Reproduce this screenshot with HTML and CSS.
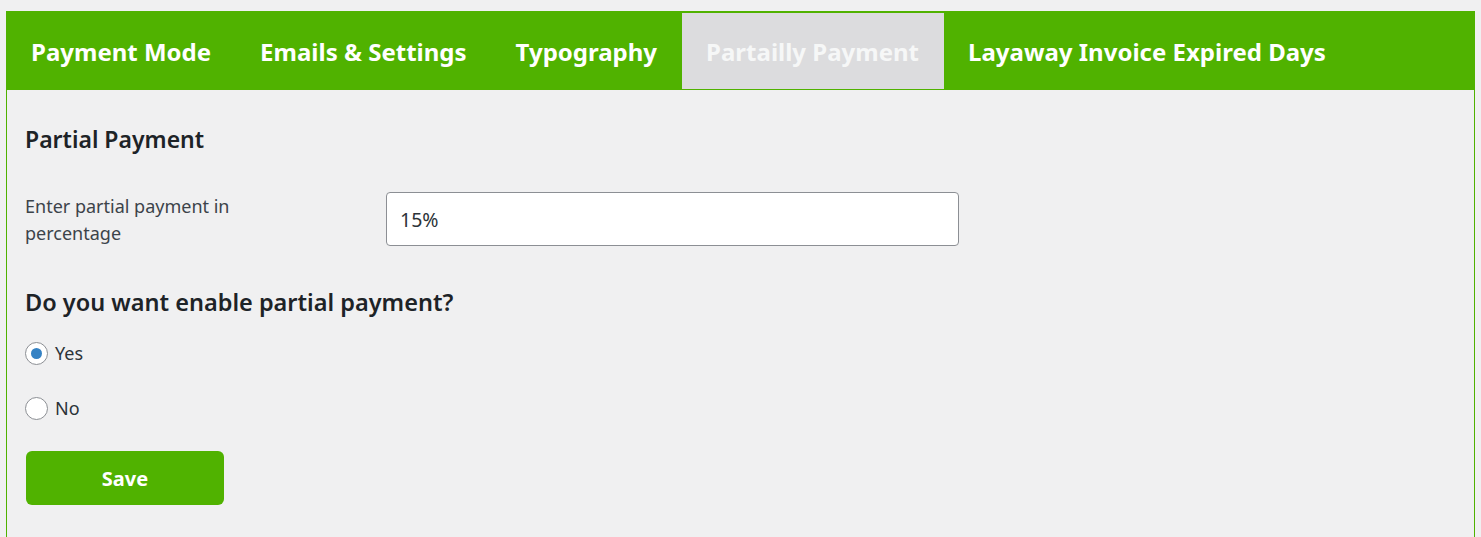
FILE: index.html
```html
<!DOCTYPE html>
<html>
<head>
<link rel="stylesheet" href="styles.css">
</head>
<body>
<div class="wrap">
  <div class="tabs">
    <a class="tab" href="#">Payment Mode</a>
    <a class="tab" href="#">Emails &amp; Settings</a>
    <a class="tab" href="#">Typography</a>
    <a class="tab active" href="#">Partailly Payment</a>
    <a class="tab" href="#">Layaway Invoice Expired Days</a>
  </div>
  <div class="panel">
    <h2>Partial Payment</h2>
    <form class="settings">
      <div class="row">
        <label for="partial" class="field-label">Enter partial payment in percentage</label>
        <input type="text" id="partial" class="text-input" value="15%">
      </div>
      <h3>Do you want enable partial payment?</h3>
      <label class="radio"><input type="radio" name="enable" value="yes" checked> Yes</label>
      <label class="radio"><input type="radio" name="enable" value="no"> No</label>
      <button type="submit" class="save">Save</button>
    </form>
  </div>
</div>
</body>
</html>
```

FILE: styles.css
```css
body {
  margin: 0;
  background: #f0f0f1;
  font-family: "Noto Sans", "Open Sans", sans-serif;
  color: #3c434a;
}

.wrap {
  margin: 11px 6px 0 6px;
  border: 1px solid #50b200;
  border-bottom: none;
  min-height: 540px;
}

/* top tabs */
.tabs {
  display: flex;
  background: #50b200;
  height: 76px;
  padding: 1px 0;
}

.tab {
  display: flex;
  align-items: center;
  padding: 0 25px 0 24px;
  color: #fff;
  font-weight: 700;
  font-size: 24px;
  text-decoration: none;
}

.tab.active {
  background: #dcdcde;
  color: #f6f7f7;
}

.panel {
  padding: 22px 18px;
}

h2 {
  margin: 11px 0 37px 0;
  font-size: 23px;
  font-weight: 600;
  color: #1d2327;
}

.row {
  display: flex;
  align-items: flex-start;
}

.field-label {
  width: 361px;
  flex-shrink: 0;
  box-sizing: border-box;
  padding-right: 140px;
  padding-top: 1px;
  font-size: 18px;
  line-height: 27px;
}

.text-input {
  width: 573px;
  height: 54px;
  box-sizing: border-box;
  border: 1px solid #8c8f94;
  border-radius: 4px;
  padding: 0 13px;
  font-family: inherit;
  font-size: 19.5px;
  color: #2c3338;
  background: #fff;
}

h3 {
  margin: 39px 0 23px 0;
  font-size: 23.5px;
  font-weight: 600;
  color: #1d2327;
}

.radio {
  display: flex;
  align-items: center;
  gap: 7px;
  font-size: 18px;
  color: #2c3338;
  margin-bottom: 31px;
}

.radio input {
  appearance: none;
  margin: 0;
  width: 23px;
  height: 23px;
  border: 1px solid #8c8f94;
  border-radius: 50%;
  background: #fff;
  display: flex;
  align-items: center;
  justify-content: center;
}

.radio input:checked::before {
  content: "";
  width: 11px;
  height: 11px;
  border-radius: 50%;
  background: #3582c4;
}

.save {
  display: block;
  width: 198px;
  height: 54px;
  margin-top: 3px;
  margin-left: 1px;
  background: #50b200;
  border: none;
  border-radius: 6px;
  color: #fff;
  font-family: inherit;
  font-weight: 700;
  font-size: 20px;
  cursor: pointer;
}
```
